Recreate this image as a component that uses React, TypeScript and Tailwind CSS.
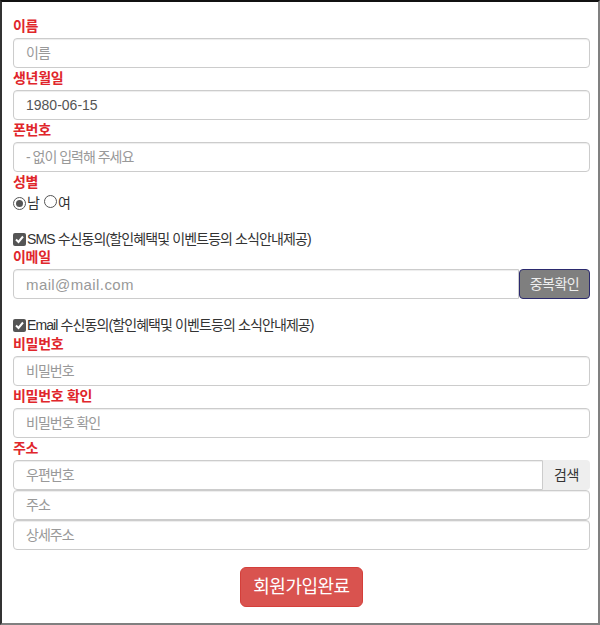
import React from "react";

const font = { fontFamily: '"Liberation Sans", "Noto Sans CJK KR", sans-serif' };

function Label({ children }: { children: React.ReactNode }) {
  return (
    <div className="h-[22px] leading-[20px] text-[14px] font-bold text-[#e0262b] tracking-[-0.3px]">{children}</div>
  );
}

function Input({ placeholder, value, className = "" }: { placeholder?: string; value?: string; className?: string }) {
  return (
    <input
      readOnly
      placeholder={placeholder}
      value={value ?? ""}
      className={
        "block w-full h-[30px] border border-[#cccccc] rounded-[4px] px-[12px] text-[14px] text-[#555] placeholder:text-[#999] bg-white shadow-[inset_0_1px_1px_rgba(0,0,0,0.075)] outline-none " +
        className
      }
      style={font}
    />
  );
}

function Check() {
  return (
    <span className="inline-flex w-[13px] h-[13px] rounded-[2px] bg-[#555] items-center justify-center mr-[1px]">
      <svg width="11" height="11" viewBox="0 0 11 11">
        <path d="M2 5.5 L4.5 8 L9 2.5" stroke="white" strokeWidth="2" fill="none" />
      </svg>
    </span>
  );
}

function Radio({ checked }: { checked?: boolean }) {
  return (
    <span className="inline-flex w-[13px] h-[13px] rounded-full border border-[#555] items-center justify-center bg-white">
      {checked && <span className="w-[7px] h-[7px] rounded-full bg-[#555]" />}
    </span>
  );
}

export default function App() {
  return (
    <div
      className="w-[600px] h-[625px] bg-white border-t-2 border-l-2 border-t-[#111] border-l-[#333] border-r-2 border-b-2 border-r-[#808080] border-b-[#808080] pl-[11px] pr-[8px] pt-[14px] text-[#333]"
      style={font}
    >
      <Label>이름</Label>
      <Input placeholder="이름" className="tracking-[-1px]" />
      <Label>생년월일</Label>
      <Input value="1980-06-15" />
      <Label>폰번호</Label>
      <Input placeholder="- 없이 입력해 주세요" className="tracking-[-1px]" />
      <Label>성별</Label>
      <div className="h-[16px] mt-[1px] flex items-center text-[14px] leading-[16px] text-[#333]">
        <Radio checked />
        <span className="ml-[1px]">남</span>
        <span className="ml-[4px]"><Radio /></span>
        <span className="ml-[1px]">여</span>
      </div>
      <div className="h-[20px]" />
      <div className="h-[16px] flex items-center text-[14px] leading-[16px] text-[#333] tracking-[-0.9px]">
        <Check />
        <span>SMS 수신동의(할인혜택및 이벤트등의 소식안내제공)</span>
      </div>
      <Label>이메일</Label>
      <div className="flex h-[30px]">
        <Input placeholder="mail@mail.com" className="rounded-r-none flex-1 text-[15px] tracking-[0.4px]" />
        <button
          className="w-[71px] h-[30px] shrink-0 bg-[#7f7f7f] border border-[#2b2a6e] rounded-[4px] text-[#eeeeee] text-[14px] tracking-[-0.5px]"
          style={font}
        >
          중복확인
        </button>
      </div>
      <div className="h-[18px]" />
      <div className="h-[16px] flex items-center text-[14px] leading-[16px] text-[#333] tracking-[-0.9px]">
        <Check />
        <span>Email 수신동의(할인혜택및 이벤트등의 소식안내제공)</span>
      </div>
      <div className="h-[1px]" />
      <Label>비밀번호</Label>
      <Input placeholder="비밀번호" className="tracking-[-1px]" />
      <Label>비밀번호 확인</Label>
      <Input placeholder="비밀번호 확인" className="tracking-[-1px]" />
      <Label>주소</Label>
      <div className="flex h-[30px]">
        <Input placeholder="우편번호" className="rounded-r-none flex-1 tracking-[-1px]" />
        <span className="w-[47px] shrink-0 h-[30px] bg-[#eeeeee] rounded-r-[4px] flex items-center justify-center text-[14px] text-[#333] tracking-[-0.5px]">
          검색
        </span>
      </div>
      <Input placeholder="주소" className="h-[29px] tracking-[-1px]" />
      <Input placeholder="상세주소" className="tracking-[-1px]" />
      <div className="flex justify-center mt-[17px]">
        <button
          className="w-[123px] h-[40px] bg-[#d9534f] border border-[#d43f3a] rounded-[6px] text-white text-[18px] tracking-[-0.5px]"
          style={font}
        >
          회원가입완료
        </button>
      </div>
    </div>
  );
}
